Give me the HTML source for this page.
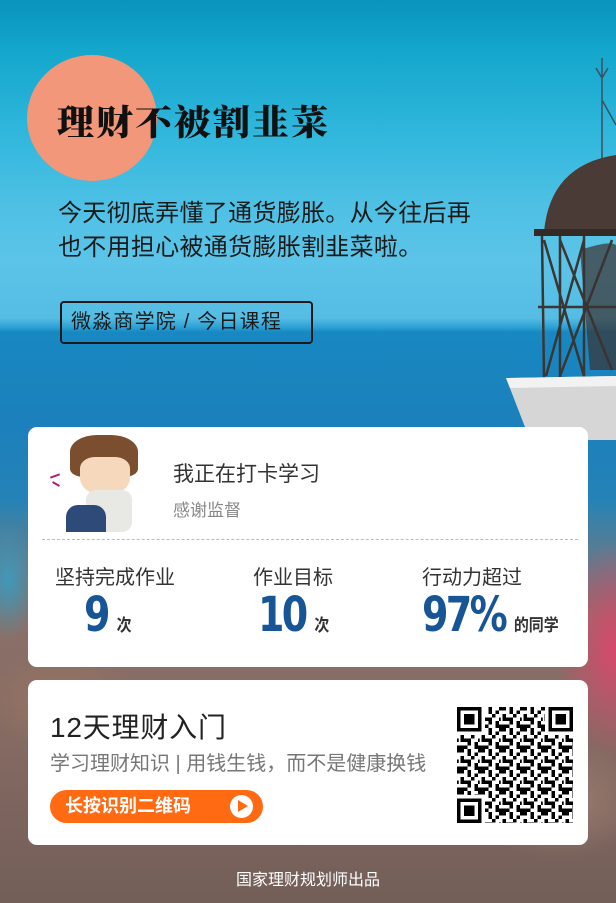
<!DOCTYPE html>
<html><head><meta charset="utf-8"><style>
*{margin:0;padding:0;box-sizing:border-box}
body{width:616px;height:903px;overflow:hidden;position:relative;font-family:"Liberation Sans","Noto Sans CJK SC",sans-serif;
background:linear-gradient(180deg,#0894bc 0px,#14a6cc 50px,#2fb6dc 130px,#4cc0e4 200px,#5cc4e8 260px,#55bde4 318px,#2a9ed4 328px,#1888c2 332px,#1b80bc 420px,#2a84b4 540px)}
.bottom{position:absolute;left:0;top:500px;width:616px;height:403px;background:
radial-gradient(ellipse 30px 60px at 8px 80px,rgba(58,156,192,.9),transparent),
radial-gradient(ellipse 60px 110px at 616px 150px,#d8486c,transparent),
radial-gradient(ellipse 80px 50px at 60px 200px,#9a7462,transparent),
radial-gradient(ellipse 120px 70px at 300px 280px,#6e5652,transparent),
radial-gradient(ellipse 90px 60px at 560px 300px,#9b7c70,transparent),
linear-gradient(180deg,rgba(42,132,180,0) 0px,rgba(110,120,130,.8) 60px,#8a7068 120px,#846a62 240px,#735e58 403px)}
.circle{position:absolute;left:27px;top:55px;width:130px;height:126px;border-radius:50%;background:#f2977a}
.title{position:absolute;left:57px;top:94px;font-family:"Liberation Serif","Noto Serif CJK SC",serif;font-weight:900;font-size:37px;color:#111;letter-spacing:2px;transform:scaleY(0.95);transform-origin:top}
.para{position:absolute;left:58px;top:197px;font-size:24px;line-height:34px;color:#1a1a1a;letter-spacing:0.3px}
.tag{position:absolute;left:60px;top:301px;width:253px;height:43px;border:2px solid #1a1a1a;border-radius:4px;font-size:20px;color:#1a1a1a;line-height:39px;padding-left:9px;letter-spacing:1.2px;white-space:pre}
.card{position:absolute;left:28px;width:560px;background:#fff;border-radius:9px}
.c1{top:427px;height:240px}
.c2{top:680px;height:165px}
.ava{position:absolute;left:24px;top:8px;width:98px;height:97px}
.t1{position:absolute;left:145px;top:31px;font-size:21px;color:#333}
.t2{position:absolute;left:145px;top:69px;font-size:17px;color:#888}
.dash{position:absolute;left:14px;right:10px;top:112px;border-top:1px dashed #bbb}
.lab{position:absolute;top:134px;font-size:20px;color:#333}
.num{position:absolute;top:160px;font-size:48px;color:#175596;font-family:"DejaVu Sans Condensed","Liberation Sans Narrow",sans-serif;font-weight:bold;letter-spacing:-3px;transform:scaleX(0.88);transform-origin:left}
.num small{font-size:17px;color:#333;font-weight:bold;letter-spacing:0;margin-left:10px;font-family:"Liberation Sans","Noto Sans CJK SC",sans-serif}
.h2{position:absolute;left:22px;top:26px;font-size:28px;color:#222;letter-spacing:0.8px}
.sub{position:absolute;left:22px;top:67px;font-size:20px;color:#777}
.btn{position:absolute;left:22px;top:110px;width:213px;height:33px;border-radius:17px;background:#ff6a13;color:#fff;font-size:18px;font-weight:bold;line-height:33px;padding-left:15px}
.play{position:absolute;right:10px;top:5px;width:23px;height:23px;border-radius:50%;background:#fff}
.play:after{content:"";position:absolute;left:8px;top:5px;border-left:10px solid #ff6a13;border-top:6.5px solid transparent;border-bottom:6.5px solid transparent}
.qr{position:absolute;left:429px;top:27px}
.foot{position:absolute;left:0;width:616px;top:866px;text-align:center;color:#fff;font-size:16px}
</style></head><body>
<div class="bottom"></div>
<svg style="position:absolute;left:500px;top:40px" width="116" height="400" viewBox="0 0 116 400">
<g stroke="#3a5060" stroke-width="1.5" fill="none"><path d="M102 18 L102 122 M96 28 L102 38 L108 28 M102 60 L116 85"/></g>
<path d="M44 192 Q50 125 116 115 L116 192 Z" fill="#4a3b37"/>
<rect x="34" y="189" width="82" height="7" fill="#332a28"/>
<g stroke="#3a3634" stroke-width="2.5" fill="none">
<path d="M42 196 L44 338 M60 196 L60 338 M84 196 L84 338 M44 200 L84 336 M84 200 L46 336 M60 200 L112 330 M112 200 L60 336"/>
<path d="M38 267 L116 267"/></g>
<path d="M80 210 Q110 200 116 205 L116 330 L90 330 Z" fill="#3a3230" opacity=".7"/>
<path d="M6 338 L116 336 L116 400 L30 400 Z" fill="#d6d6d6"/>
<path d="M6 338 L116 336 L116 346 L10 348 Z" fill="#f2f2f2"/>
</svg>
<div class="circle"></div>
<div class="title">理财不被割韭菜</div>
<div class="para">今天彻底弄懂了通货膨胀。从今往后再<br>也不用担心被通货膨胀割韭菜啦。</div>
<div class="tag">微淼商学院 / 今日课程</div>

<div class="card c1">
<div class="ava">
<div style="position:absolute;left:18px;top:0;width:68px;height:42px;background:#7a4e2e;border-radius:40% 40% 20% 20%"></div>
<div style="position:absolute;left:28px;top:22px;width:50px;height:38px;background:#f6d9bc;border-radius:30% 30% 45% 45%"></div>
<div style="position:absolute;left:34px;top:55px;width:46px;height:42px;background:#e8e8e4;border-radius:10px"></div>
<div style="position:absolute;left:14px;top:70px;width:40px;height:27px;background:#2e4a78;border-radius:12px 12px 0 0"></div>
<div style="position:absolute;left:-2px;top:40px;width:10px;height:2px;background:#b0207a;transform:rotate(-20deg)"></div>
<div style="position:absolute;left:0;top:48px;width:8px;height:2px;background:#b0207a;transform:rotate(30deg)"></div>
</div>
<div class="t1">我正在打卡学习</div>
<div class="t2">感谢监督</div>
<div class="dash"></div>
<div class="lab" style="left:27px">坚持完成作业</div>
<div class="lab" style="left:225px">作业目标</div>
<div class="lab" style="left:394px">行动力超过</div>
<div class="num" style="left:56px">9<small>次</small></div>
<div class="num" style="left:230px">10<small>次</small></div>
<div class="num" style="left:394px">97%<small>的同学</small></div>
</div>

<div class="card c2">
<div class="h2">12天理财入门</div>
<div class="sub">学习理财知识 | 用钱生钱，而不是健康换钱</div>
<div class="btn">长按识别二维码<div class="play"></div></div>
<svg class="qr" width="116" height="116" viewBox="0 0 116 116">
<defs><pattern id="p" width="21" height="21" patternUnits="userSpaceOnUse">
<rect width="21" height="21" fill="#fff"/>
<g fill="#000"><rect x="0" y="0" width="7" height="3.5"/><rect x="10.5" y="0" width="3.5" height="7"/><rect x="17.5" y="3.5" width="3.5" height="3.5"/><rect x="3.5" y="7" width="3.5" height="7"/><rect x="7" y="10.5" width="7" height="3.5"/><rect x="14" y="7" width="3.5" height="3.5"/><rect x="17.5" y="14" width="3.5" height="7"/><rect x="0" y="17.5" width="10.5" height="3.5"/><rect x="10.5" y="14" width="3.5" height="3.5"/><rect x="0" y="10.5" width="1.75" height="3.5"/></g></pattern></defs>
<rect width="116" height="116" fill="url(#p)"/>
<g fill="#fff"><rect x="0" y="0" width="28" height="28"/><rect x="88" y="0" width="28" height="28"/><rect x="0" y="88" width="28" height="28"/></g>
<g fill="none" stroke="#000" stroke-width="3.5"><rect x="1.75" y="1.75" width="21" height="21"/><rect x="93.25" y="1.75" width="21" height="21"/><rect x="1.75" y="93.25" width="21" height="21"/></g>
<g fill="#000"><rect x="7" y="7" width="10.5" height="10.5"/><rect x="98.5" y="7" width="10.5" height="10.5"/><rect x="7" y="98.5" width="10.5" height="10.5"/></g>
</svg>
</div>
<div class="foot">国家理财规划师出品</div>
</body></html>
